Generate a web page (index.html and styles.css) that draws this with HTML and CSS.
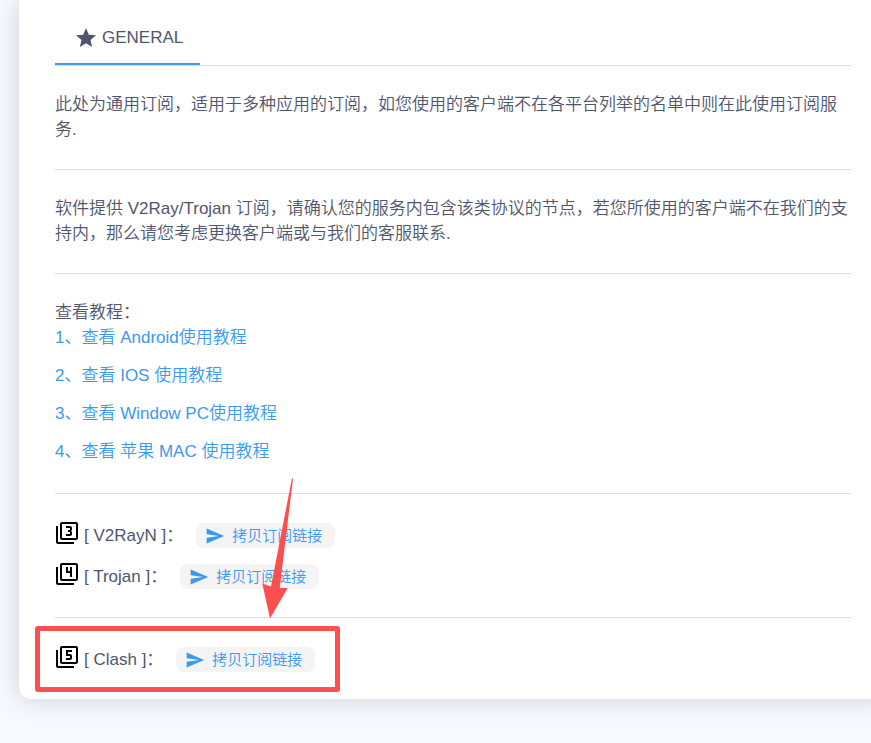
FILE: index.html
```html
<!DOCTYPE html>
<html lang="zh-CN">
<head>
<meta charset="utf-8">
<meta name="viewport" content="width=device-width, initial-scale=1">
<title>General</title>
<link rel="stylesheet" href="styles.css">
</head>
<body>
<svg class="sprite" aria-hidden="true">
  <symbol id="send" viewBox="0 0 24 24"><path d="M2.01 21L23 12 2.01 3 2 10l15 2-15 2z"/></symbol>
  <symbol id="frame" viewBox="0 0 24 24"><path d="M21 1H7c-1.1 0-2 .9-2 2v14c0 1.1.9 2 2 2h14c1.1 0 2-.9 2-2V3c0-1.1-.9-2-2-2zm0 16H7V3h14v14zM3 5H1v16c0 1.1.9 2 2 2h16v-2H3V5z"/></symbol>
</svg>
<main class="card">
  <nav class="tabs">
    <a class="tab" href="#general">
      <svg class="icon" viewBox="0 0 24 24" aria-hidden="true"><path d="M12 17.27L18.18 21l-1.64-7.03L22 9.24l-7.19-.61L12 2 9.19 8.63 2 9.24l5.46 4.73L5.82 21z"/></svg>
      <span>GENERAL</span>
    </a>
  </nav>
  <section id="general">
    <p class="block">此处为通用订阅，适用于多种应用的订阅，如您使用的客户端不在各平台列举的名单中则在此使用订阅服务.</p>
    <hr>
    <p class="block">软件提供 V2Ray/Trojan 订阅，请确认您的服务内包含该类协议的节点，若您所使用的客户端不在我们的支持内，那么请您考虑更换客户端或与我们的客服联系.</p>
    <hr>
    <div class="block">
      <div>查看教程：</div>
      <div class="guides">
        <a href="#android">1、查看 Android使用教程</a>
        <a href="#ios">2、查看 IOS 使用教程</a>
        <a href="#windows">3、查看 Window PC使用教程</a>
        <a href="#mac">4、查看 苹果 MAC 使用教程</a>
      </div>
    </div>
    <hr>
    <div class="rows">
      <div class="row">
        <svg class="icon number" viewBox="0 0 24 24" aria-hidden="true"><use href="#frame"/><path d="M17 13v-1.5c0-.83-.67-1.5-1.5-1.5.83 0 1.5-.67 1.5-1.5V7c0-1.11-.9-2-2-2h-4v2h4v2h-2v2h2v2h-4v2h4c1.1 0 2-.89 2-2z"/></svg>
        <span class="name">[ V2RayN ]：</span>
        <button class="copy" type="button"><svg aria-hidden="true"><use href="#send"/></svg>拷贝订阅链接</button>
      </div>
      <div class="row">
        <svg class="icon number" viewBox="0 0 24 24" aria-hidden="true"><use href="#frame"/><path d="M15 15h2V5h-2v4h-2V5h-2v6h4v4z"/></svg>
        <span class="name">[ Trojan ]：</span>
        <button class="copy" type="button"><svg aria-hidden="true"><use href="#send"/></svg>拷贝订阅链接</button>
      </div>
    </div>
    <hr>
    <div class="rows">
      <div class="row">
        <svg class="icon number" viewBox="0 0 24 24" aria-hidden="true"><use href="#frame"/><path d="M17 13v-2c0-1.11-.9-2-2-2h-2V7h4V5h-6v6h4v2h-4v2h4c1.1 0 2-.89 2-2z"/></svg>
        <span class="name">[ Clash ]：</span>
        <button class="copy" type="button"><svg aria-hidden="true"><use href="#send"/></svg>拷贝订阅链接</button>
        <span class="outline"></span>
        <svg class="arrow" viewBox="0 0 28 142" aria-hidden="true"><path d="M30 1L31 2 17.700 111H25.700L8 141.500 0.300 106.500 9 109.500z"/></svg>
      </div>
    </div>
  </section>
</main>
</body>
</html>
```
FILE: styles.css
```css
* { box-sizing: border-box; }

body {
  margin: 0;
  min-height: 100vh;
  overflow: hidden;
  background: #f8f9fe;
  color: #4f566b;
  font: 350 17px/25px "Liberation Sans", "Noto Sans CJK SC", sans-serif;
}

.sprite { position: absolute; width: 0; height: 0; }
svg { fill: currentColor; flex: none; }

.card {
  margin: 0 -16px 0 19px;
  padding: 10px 36px 0;
  background: #fff;
  border-radius: 0 0 12px 12px;
  box-shadow: 0 0 24px rgba(40, 45, 60, 0.2);
}

.tabs {
  display: flex;
  border-bottom: 1px solid #dedfe1;
}

.tab {
  display: flex;
  align-items: center;
  gap: 4px;
  height: 55px;
  padding: 2px 17px 0 19px;
  border-bottom: 2px solid #3d9cf0;
  color: inherit;
  text-decoration: none;
}

.icon { width: 24px; height: 24px; }

.block { margin: 26px 0 27px; }

hr {
  margin: 0;
  border: 0;
  border-top: 1px solid #dedfe1;
}

.guides {
  display: flex;
  flex-direction: column;
  align-items: flex-start;
  gap: 13px;
  padding-bottom: 2px;
}

.guides a { color: #3a99f0; text-decoration: none; }

.rows { padding: 21px 0 20px; }
.rows:last-child { padding-bottom: 19px; }

.row {
  position: relative;
  display: flex;
  align-items: center;
  width: fit-content;
  height: 41px;
}

.number { color: #000; margin-bottom: 6px; }
.name { margin: 0 13px 0 5px; }

.copy {
  display: flex;
  align-items: center;
  gap: 7px;
  height: 25px;
  padding: 0 13px 0 9px;
  border: 0;
  border-radius: 8px;
  background: #f4f4f5;
  color: #3a99f0;
  font: inherit;
  font-size: 15px;
}

.copy svg { width: 20px; height: 20px; }

.outline {
  position: absolute;
  inset: -13px -25px -12px -20px;
  border: 5px solid #fc5050;
  border-radius: 3px;
}

.arrow {
  position: absolute;
  right: 25px;
  bottom: 61px;
  width: 28px;
  height: 142px;
  overflow: visible;
  color: #fc5050;
}
```
